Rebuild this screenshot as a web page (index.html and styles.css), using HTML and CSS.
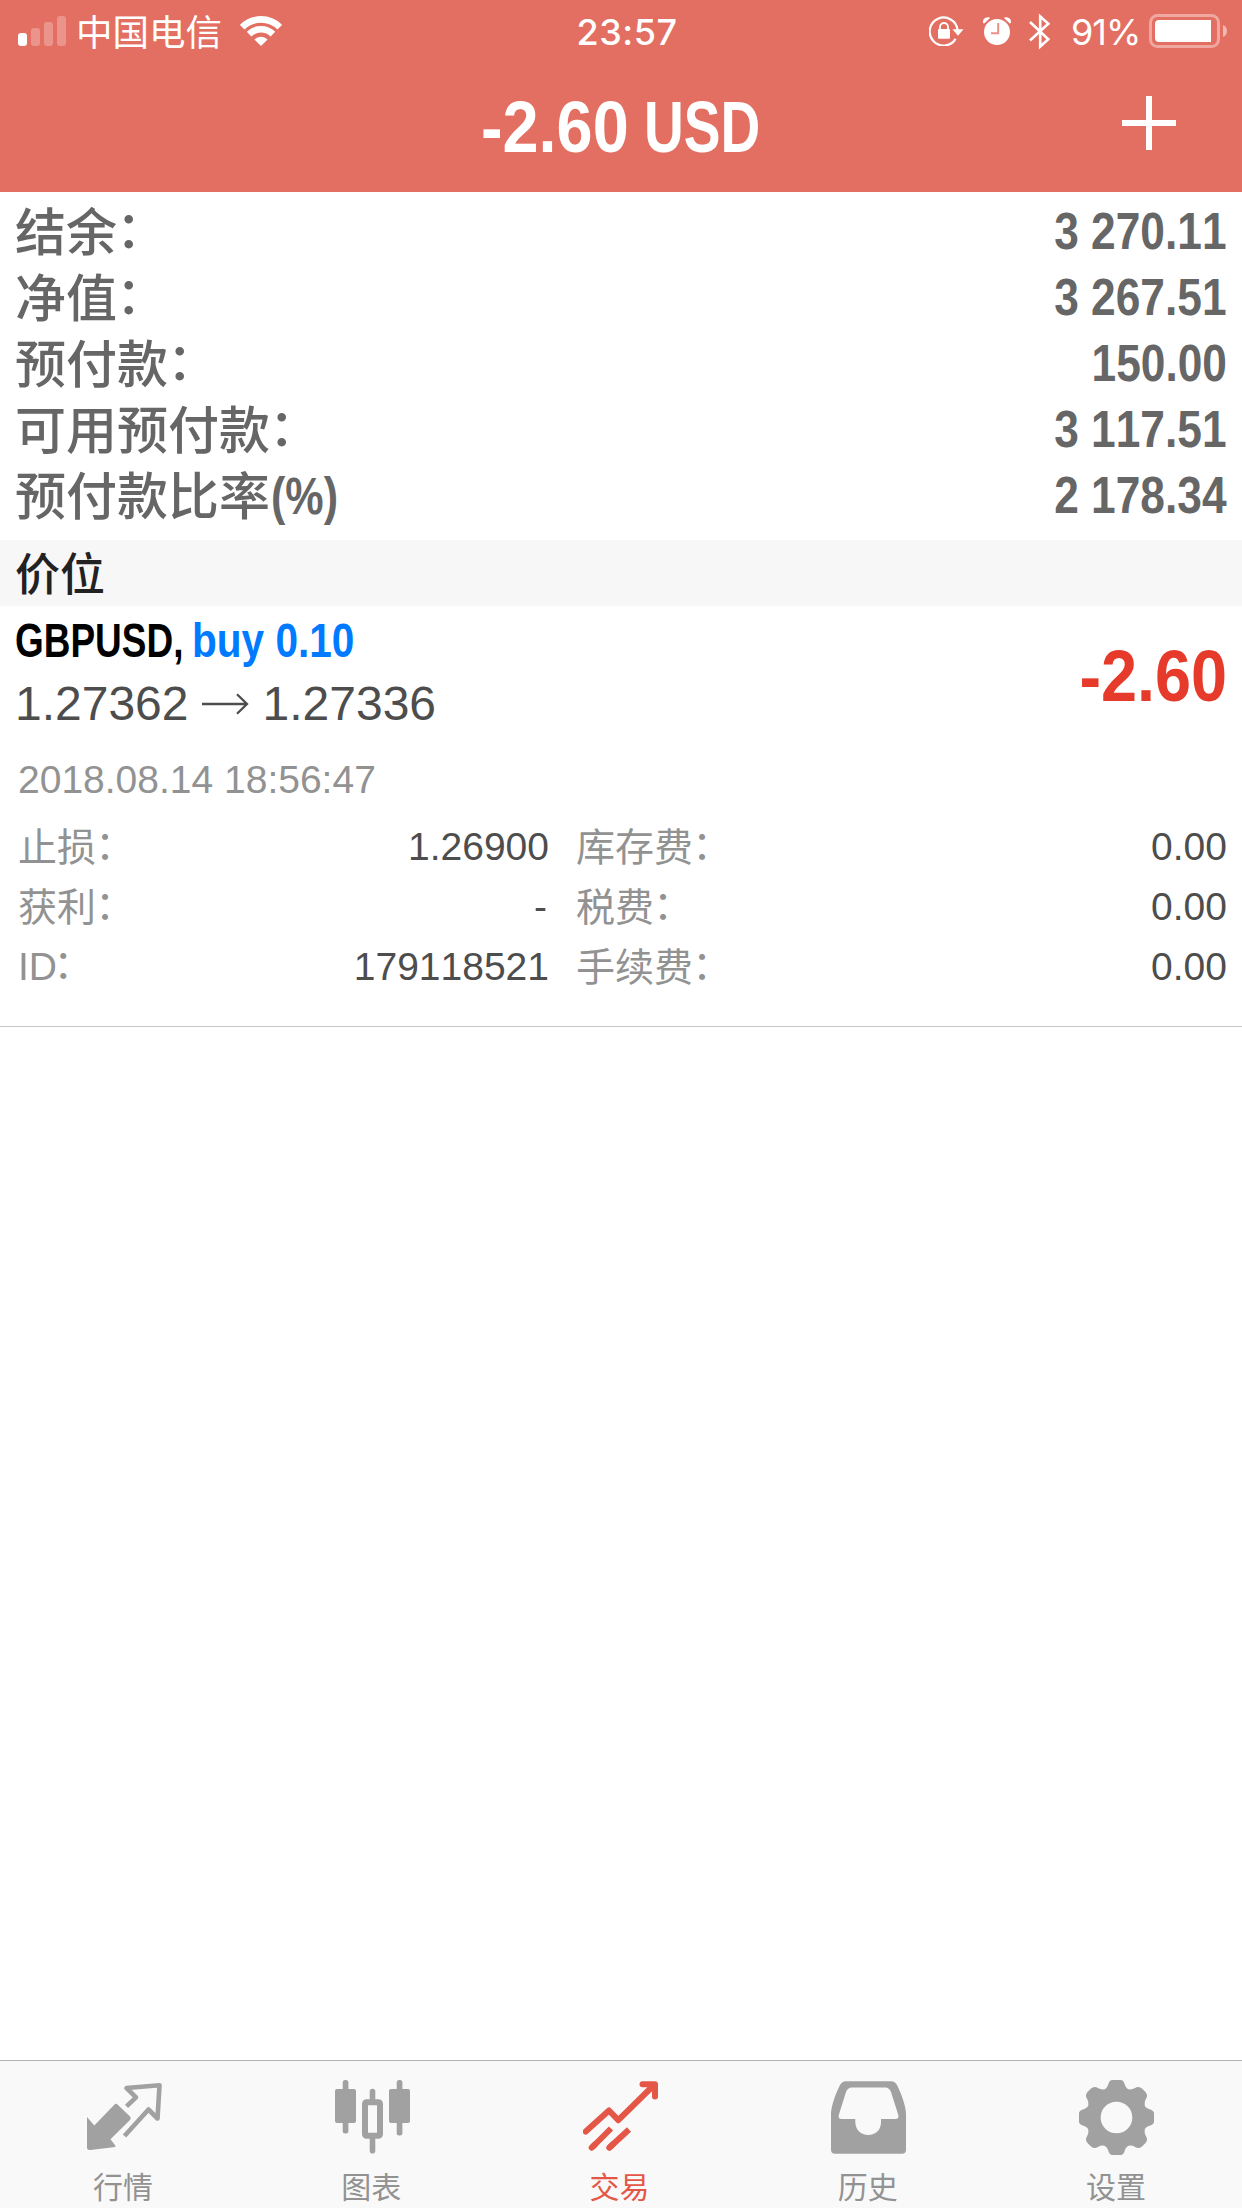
FILE: index.html
```html
<!DOCTYPE html>
<html lang="zh-CN">
<head>
<meta charset="utf-8">
<title>交易</title>
<link rel="stylesheet" href="styles.css">
</head>
<body>
<div class="app">
  <header class="header">
    <div class="status">
      <div class="status-left">
        <svg class="signal" width="48" height="30" viewBox="0 0 48 30" fill="#fff">
          <rect x="0" y="17" width="9" height="13" rx="3"/>
          <g opacity=".26"><rect x="13" y="12" width="9" height="18" rx="3"/><rect x="26" y="6" width="9" height="24" rx="3"/><rect x="39" y="0" width="9" height="30" rx="3"/></g>
        </svg>
        <span class="carrier">中国电信</span>
        <svg class="wifi" width="42" height="30" viewBox="0 0 42 30">
          <g fill="none" stroke="#fff" stroke-width="6.6"><path d="M2.2 11.2A26.6 26.6 0 0 1 39.8 11.2"/><path d="M9.1 18.1A16.9 16.9 0 0 1 32.9 18.1"/></g>
          <path fill="#fff" d="M21 30L14.4 23.6A9.3 9.3 0 0 1 27.6 23.6Z"/>
        </svg>
      </div>
      <div class="clock">23:57</div>
      <div class="status-right">
        <svg class="lock" width="35" height="30" viewBox="0 0 35 30">
          <path d="M26.6 22.9A14 14 0 1 1 28.6 14" fill="none" stroke="#fff" stroke-width="2.2"/>
          <path fill="#fff" d="M23.5 13.2H34.5L29 19.8ZM9 13.8q0-.8 1-.8h10q1 0 1 .8v8q0 1-1 1H10q-1 0-1-1Z"/>
          <path d="M11 14V11a4 4 0 0 1 8 0v3" fill="none" stroke="#fff" stroke-width="1.8"/>
        </svg>
        <svg class="alarm" width="28" height="28" viewBox="0 0 28 28">
          <circle cx="14" cy="15" r="13" fill="#fff"/>
          <path d="M15.2 6V16.2H8" fill="none" stroke="#e99186" stroke-width="2"/>
          <path fill="#fff" d="M0 6Q-.5 0 6 .2L7 1L1.2 6.5ZM28 6Q28.5 0 22 .2L21 1L26.8 6.5Z"/>
        </svg>
        <svg class="bt" width="22" height="37" viewBox="0 0 22 37"><path d="M1 9L19.3 26.3L11.2 33.5V3.5L19.3 10.7L1 27.5" fill="none" stroke="#fff" stroke-width="2.6"/></svg>
        <span class="percent">91%</span>
        <svg class="battery" width="78" height="34" viewBox="0 0 78 34">
          <rect x="1.5" y="1.5" width="68" height="31" rx="7" fill="none" stroke="#fff" stroke-opacity=".4" stroke-width="3"/>
          <path d="M10 6H62V28H10Q6 28 6 24V10Q6 6 10 6Z" fill="#fff"/>
          <path d="M74 11Q78 12.500 78 17Q78 21.500 74 23Z" fill="#fff" fill-opacity=".5"/>
        </svg>
      </div>
    </div>
    <div class="titlebar">
      <h1 class="title"><span class="amount">-2.60</span><span class="currency">USD</span></h1>
      <svg class="plus" width="54" height="54" viewBox="0 0 54 54"><path d="M27 0V54M0 27H54" stroke="#fff" stroke-width="6"/></svg>
    </div>
  </header>

  <section class="summary">
    <div class="row"><span>结余<i class="colon" lang="ja">：</i></span><b>3 270.11</b></div>
    <div class="row"><span>净值<i class="colon" lang="ja">：</i></span><b>3 267.51</b></div>
    <div class="row"><span>预付款<i class="colon" lang="ja">：</i></span><b>150.00</b></div>
    <div class="row"><span>可用预付款<i class="colon" lang="ja">：</i></span><b>3 117.51</b></div>
    <div class="row"><span>预付款比率<i class="unit">(%)</i></span><b>2 178.34</b></div>
  </section>

  <div class="section-title">价位</div>

  <section class="position">
    <div class="deal">
      <div>
        <div class="symbol"><span class="name">GBPUSD,</span><span class="side">buy 0.10</span></div>
        <div class="prices"><span>1.27362</span>
          <svg class="arrow" width="47" height="22" viewBox="0 0 47 22"><path d="M0 11H45M35 1.200L45 11L35 20.800" fill="none" stroke="#4d4d4d" stroke-width="2.300"/></svg>
          <span>1.27336</span></div>
      </div>
      <div class="profit">-2.60</div>
    </div>
    <div class="time">2018.08.14 18:56:47</div>
    <dl class="details">
      <dt>止损<i class="colon" lang="ja">：</i></dt><dd>1.26900</dd><dt>库存费<i class="colon" lang="ja">：</i></dt><dd>0.00</dd>
      <dt>获利<i class="colon" lang="ja">：</i></dt><dd class="none">-</dd><dt>税费<i class="colon" lang="ja">：</i></dt><dd>0.00</dd>
      <dt class="latin">ID<i class="colon" lang="ja">：</i></dt><dd>179118521</dd><dt>手续费<i class="colon" lang="ja">：</i></dt><dd>0.00</dd>
    </dl>
  </section>

  <nav class="tabs">
    <div class="tab">
      <svg width="75" height="75" viewBox="0 0 75 75">
        <path fill="#a1a1a1" d="M0 37L7.300 45.500L27.500 24.500Q29 23 30.500 24.500L43 36.500Q44.500 38.300 43 40L23.500 59.300L28.300 65.500V67L3.300 70Q0 70.300 0 68Z"/>
        <path fill="none" stroke="#a1a1a1" stroke-width="4.600" stroke-linejoin="round" d="M39.500 26.300L49 17.300L39.500 8L72.500 5.300L70.500 38.500L61.500 29.500L37.500 56"/>
      </svg>
      <span>行情</span>
    </div>
    <div class="tab">
      <svg width="75" height="75" viewBox="0 0 75 75" fill="#a1a1a1">
        <rect x="0" y="9" width="21" height="34" rx="2"/><rect x="7.700" y="0" width="5.700" height="53.500" rx="2.500"/>
        <rect x="54" y="9" width="21" height="34" rx="2"/><rect x="61.700" y="0" width="5.700" height="55.500" rx="2.500"/>
        <rect x="30" y="22.300" width="15" height="33.500" rx="1.500" fill="none" stroke="#a1a1a1" stroke-width="6"/>
        <path d="M34.700 21V11.500a2.800 2.800 0 0 1 5.600 0V21ZM34.700 57V70.800a2.800 2.800 0 0 0 5.600 0V57Z"/>
      </svg>
      <span>图表</span>
    </div>
    <div class="tab active">
      <svg width="75" height="75" viewBox="0 0 75 75" fill="none" stroke="#e45747" stroke-width="6">
        <path stroke-linecap="round" stroke-linejoin="round" d="M2.700 51.500L26 30.500L35.300 40.200L71.500 4.500M59.500 4.200H72V16.500"/>
        <path d="M9 67.500L28 48.500M26.500 67.500L46 49.500"/>
        <path stroke-linecap="round" d="M8.700 67.700L12 64.500M26.300 67.700L30 64.300"/>
      </svg>
      <span>交易</span>
    </div>
    <div class="tab">
      <svg width="75" height="75" viewBox="0 0 75 75">
        <path fill="#a1a1a1" fill-rule="evenodd" d="M15 1.300H60Q64.500 1.500 66.500 6C70 13 75 26 75 34V70Q75 73.700 71 73.700H4Q0 73.700 0 70V34C0 26 5 13 8.500 6Q10.500 1.500 15 1.300ZM20 7.500Q16.500 8 15 12L7.800 35Q7 39 10.500 39H24.300V42C24.500 50 30 55 37.300 55S50 50 50 42V39H64.500Q68.300 39 67.300 35L60 12Q58.500 8 55 7.500Z"/>
      </svg>
      <span>历史</span>
    </div>
    <div class="tab">
      <svg width="75" height="75" viewBox="0 0 75 75">
        <path fill="#a1a1a1" fill-rule="evenodd" d="M32.700 0H42.300Q44.500 .5 45.300 3Q46.500 8 49.500 9.300Q53 9.800 55.700 8.300Q59.500 5.500 63 8.500L66.500 12Q69.500 15.500 66.700 19.300Q65.200 22 65.700 25.500Q67 28.500 72 29.700Q74.500 30.500 75 32.700V42.300Q74.500 44.500 72 45.300Q67 46.500 65.700 49.500Q65.200 53 66.700 55.700Q69.500 59.500 66.500 63L63 66.500Q59.500 69.500 55.700 66.700Q53 65.200 49.500 65.700Q46.500 67 45.300 72Q44.500 74.500 42.300 75H32.700Q30.500 74.500 29.700 72Q28.500 67 25.500 65.700Q22 65.200 19.300 66.700Q15.500 69.500 12 66.500L8.500 63Q5.500 59.500 8.300 55.700Q9.800 53 9.300 49.500Q8 46.500 3 45.300Q.5 44.500 0 42.300V32.700Q.5 30.500 3 29.700Q8 28.500 9.300 25.500Q9.800 22 8.300 19.300Q5.500 15.500 8.500 12L12 8.500Q15.500 5.500 19.300 8.300Q22 9.800 25.500 9.300Q28.500 8 29.700 3Q30.500 .5 32.700 0ZM37.500 21.700A15.800 15.800 0 1 0 37.500 53.300A15.800 15.800 0 1 0 37.500 21.700Z"/>
      </svg>
      <span>设置</span>
    </div>
  </nav>
</div>
</body>
</html>
```
FILE: styles.css
```css
* { box-sizing: border-box; margin: 0; padding: 0; }
body {
  background: #fff;
  font-family: "Liberation Sans", "Noto Sans CJK SC", sans-serif;
  font-kerning: none;
}
svg { display: block; flex: none; }
.app { width: 1242px; height: 2208px; display: flex; flex-direction: column; overflow: hidden; }

.header { height: 192px; background: #e36f62; color: #fff; }
.status { height: 60px; display: grid; grid-template-columns: 1fr 120px 1fr; align-items: center; }
.status-left, .status-right { display: flex; align-items: center; height: 60px; }
.status-left { padding-left: 18px; }
.status-right { justify-content: flex-end; padding-right: 15px; }
.carrier { font: 400 36.5px/58px "Noto Sans CJK SC", sans-serif; margin-left: 10px; width: 147px; }
.wifi { margin-left: 17px; }
.clock { font: 500 36px/60px Inter, sans-serif; letter-spacing: .5px; text-align: center; padding: 2px 0 0 12px; white-space: nowrap; }
.alarm { margin-left: 19px; }
.bt { margin-left: 18px; }
.percent { font: 400 36px/60px Inter, sans-serif; letter-spacing: -1px; margin-left: 20px; width: 69px; padding-top: 2px; white-space: nowrap; }
.battery { margin-left: 9px; }
.titlebar { height: 132px; display: grid; grid-template-columns: 120px 1fr 120px; align-items: start; }
.title { grid-column: 2; display: flex; justify-content: center; font-size: 72px; line-height: 80px; margin-top: 27px; padding-right: 1px; }
.amount { width: 163px; transform: scaleX(.9); transform-origin: left; }
.currency { width: 117px; transform: scaleX(.765); transform-origin: left; }
.plus { margin-top: 36px; }

.summary { height: 348px; padding: 5px 15px 0; color: #666; }
.row { display: flex; justify-content: space-between; height: 66px; font-size: 51px; line-height: 66px; }
.row > span { font-weight: 500; white-space: nowrap; padding-top: 4px; }
.row b { padding-top: 2px; transform: scaleX(.868); transform-origin: right; }
.colon { font-style: normal; font-family: "Liberation Sans", "Noto Sans CJK JP", sans-serif; margin-left: -.27em; }
.unit { display: inline-block; width: 70px; font-style: normal; font-weight: 700; transform: translate(1px, -1px) scaleX(.845); transform-origin: left; }

.section-title { height: 66px; background: #f7f7f7; padding-left: 15px; font: 500 45px/64px "Noto Sans CJK SC", sans-serif; color: #222; }

.position { height: 421px; border-bottom: 1px solid #c8c7cc; padding: 0 15px; }
.deal { display: flex; justify-content: space-between; height: 140px; }
.symbol { display: flex; font-size: 48px; font-weight: 700; line-height: 70px; height: 68px; white-space: nowrap; }
.name { width: 177px; color: #000; transform: scaleX(.77); transform-origin: left; }
.side { color: #007aff; transform: scaleX(.845); transform-origin: left; }
.prices { display: flex; align-items: center; height: 60px; font-size: 48px; line-height: 60px; color: #4d4d4d; }
.arrow { margin: 0 14px 0 13px; }
.profit { font-size: 72px; font-weight: 700; line-height: 140px; color: #e63b2a; transform: scaleX(.9); transform-origin: right; }
.time { font-size: 39px; line-height: 60px; color: #929292; padding-left: 3px; margin-top: 4px; }
.details { display: grid; grid-template-columns: 200px 331px 231px 1fr; grid-auto-rows: 60px; font-size: 39px; line-height: 60px; padding: 7px 0 0 3px; color: #4d4d4d; }
.details dt { color: #929292; padding-top: 1px; }
.details dt.latin { padding-top: 0; }
.latin .colon { margin-left: -.34em; }
.details dt:nth-of-type(even) { padding-left: 27px; }
.details dd { text-align: right; }
.details .none { padding-right: 2px; }

.tabs { margin-top: auto; height: 148px; display: flex; background: #f9f9f9; border-top: 1px solid #b2b2b2; padding-right: 1px; }
.tab { flex: 1; display: flex; flex-direction: column; align-items: center; padding-top: 19px; font: 400 30px/36px "Noto Sans CJK SC", sans-serif; color: #929292; }
.tab span { margin: 12px 2px 0 0; }
.active { color: #e45747; }
```
